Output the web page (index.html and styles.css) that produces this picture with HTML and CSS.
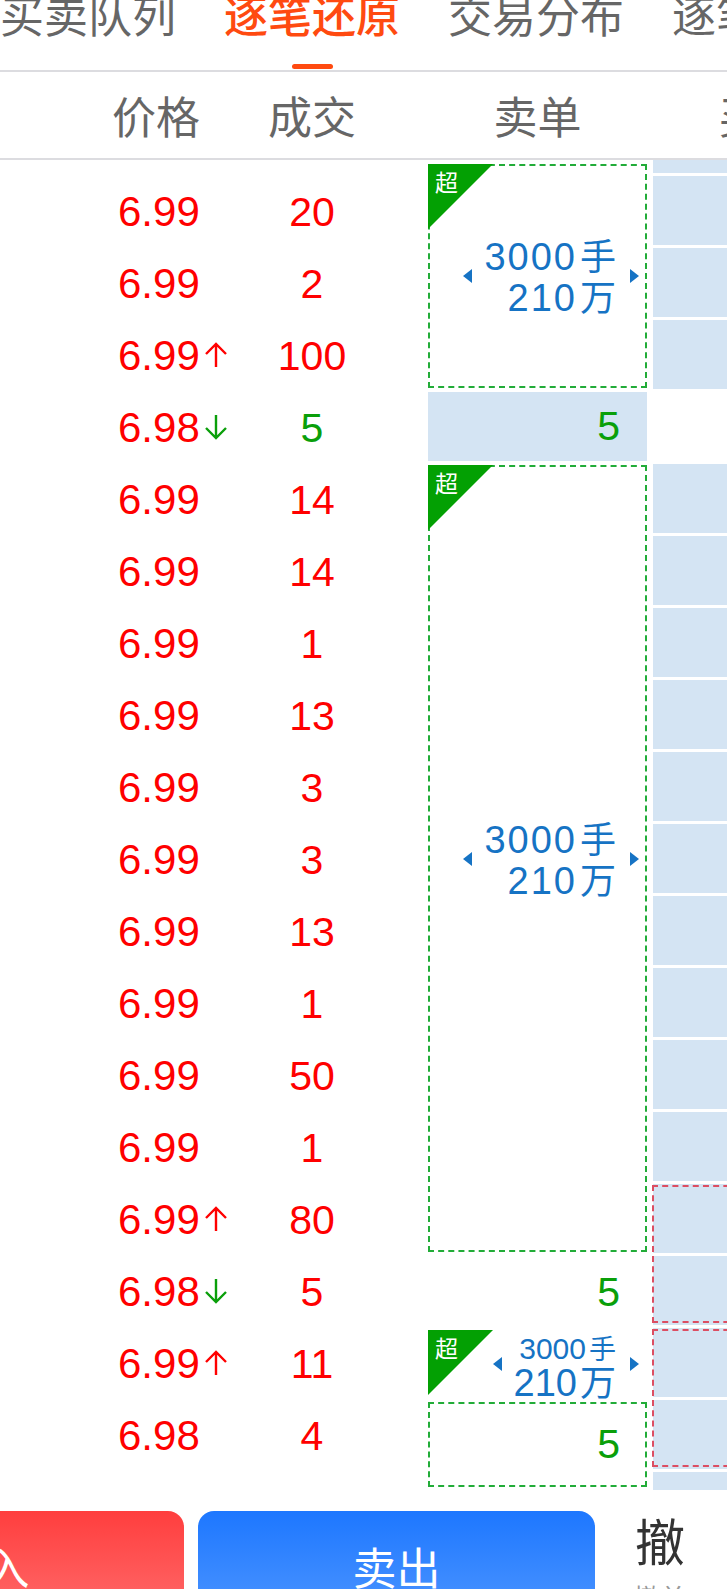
FILE: index.html
```html
<!DOCTYPE html>
<html lang="zh-CN">
<head>
    <meta charset="UTF-8">
    <title>逐笔还原</title>
    <link rel="stylesheet" href="styles.css">
</head>
<body>
<div class="tabs">
    <div class="tab"><span>买卖队列</span></div>
    <div class="tab current"><span>逐笔还原</span><i class="tab-line"></i></div>
    <div class="tab"><span>交易分布</span></div>
    <div class="tab"><span>逐笔明细</span></div>
</div>

<div class="head">
    <span class="h-price">价格</span>
    <span class="h-vol">成交</span>
    <span class="h-sell">卖单</span>
    <span class="h-buy">买单</span>
</div>

<div class="book">
    <!--逐笔成交-->
    <div class="trades">
        <div class="trade"><span class="p">6.99</span><span class="v">20</span></div>
        <div class="trade"><span class="p">6.99</span><span class="v">2</span></div>
        <div class="trade"><span class="p">6.99<svg class="arr" viewBox="0 0 24 26"><path d="M12 25V2M2 12L12 2L22 12"/></svg></span><span class="v">100</span></div>
        <div class="trade"><span class="p">6.98<svg class="arr down" viewBox="0 0 24 26"><path d="M12 1V24M2 14L12 24L22 14"/></svg></span><span class="v down">5</span></div>
        <div class="trade"><span class="p">6.99</span><span class="v">14</span></div>
        <div class="trade"><span class="p">6.99</span><span class="v">14</span></div>
        <div class="trade"><span class="p">6.99</span><span class="v">1</span></div>
        <div class="trade"><span class="p">6.99</span><span class="v">13</span></div>
        <div class="trade"><span class="p">6.99</span><span class="v">3</span></div>
        <div class="trade"><span class="p">6.99</span><span class="v">3</span></div>
        <div class="trade"><span class="p">6.99</span><span class="v">13</span></div>
        <div class="trade"><span class="p">6.99</span><span class="v">1</span></div>
        <div class="trade"><span class="p">6.99</span><span class="v">50</span></div>
        <div class="trade"><span class="p">6.99</span><span class="v">1</span></div>
        <div class="trade"><span class="p">6.99<svg class="arr" viewBox="0 0 24 26"><path d="M12 25V2M2 12L12 2L22 12"/></svg></span><span class="v">80</span></div>
        <div class="trade"><span class="p">6.98<svg class="arr down" viewBox="0 0 24 26"><path d="M12 1V24M2 14L12 24L22 14"/></svg></span><span class="v">5</span></div>
        <div class="trade"><span class="p">6.99<svg class="arr" viewBox="0 0 24 26"><path d="M12 25V2M2 12L12 2L22 12"/></svg></span><span class="v">11</span></div>
        <div class="trade"><span class="p">6.98</span><span class="v">4</span></div>
    </div>

    <!--卖单-->
    <div class="sells">
        <div class="order big first">
            <span class="tag">超</span>
            <i class="tri-l"></i>
            <div class="amt"><b>3000<em>手</em></b><b>210<em>万</em></b></div>
            <i class="tri-r"></i>
        </div>
        <div class="order fill">5</div>
        <div class="order big long">
            <span class="tag">超</span>
            <i class="tri-l"></i>
            <div class="amt"><b>3000<em>手</em></b><b>210<em>万</em></b></div>
            <i class="tri-r"></i>
        </div>
        <div class="order plain">5</div>
        <div class="order bare">
            <span class="tag">超</span>
            <i class="tri-l"></i>
            <div class="amt small"><b>3000<em>手</em></b><b>210<em>万</em></b></div>
            <i class="tri-r"></i>
        </div>
        <div class="order box last">5</div>
    </div>

    <!--买单-->
    <div class="buys">
        <div class="cell top"></div>
        <div class="cell"></div>
        <div class="cell"></div>
        <div class="cell"></div>
        <div class="blank"></div>
        <div class="cell"></div>
        <div class="cell"></div>
        <div class="cell"></div>
        <div class="cell"></div>
        <div class="cell"></div>
        <div class="cell"></div>
        <div class="cell"></div>
        <div class="cell"></div>
        <div class="cell"></div>
        <div class="cell"></div>
        <div class="hold">
            <div class="cell"></div>
            <div class="cell"></div>
        </div>
        <div class="hold">
            <div class="cell"></div>
            <div class="cell"></div>
        </div>
        <div class="cell end"></div>
    </div>
</div>

<div class="actions">
    <div class="btn buy">买入</div>
    <div class="btn sell">卖出</div>
    <div class="cancel">
        <span class="cancel-icon">撤</span>
        <span class="cancel-txt">撤单</span>
    </div>
</div>
</body>
</html>
```

FILE: styles.css
```css
html, body {
    margin: 0;
    padding: 0;
    overflow: hidden;
    background: #fff;
}

body {
    width: 727px;
    height: 1589px;
    font-family: "Liberation Sans", "Noto Sans CJK SC", sans-serif;
}

/* 顶部标签 */
.tabs {
    display: flex;
    gap: 48px;
    height: 70px;
    border-bottom: 2px solid #dcdce0;
    font-family: "Noto Sans CJK SC", sans-serif;
    font-size: 44px;
    color: #666;
}

.tab {
    flex: none;
    width: 176px;
    display: flex;
    flex-direction: column;
    align-items: center;
}

.tab span {
    line-height: 28px;
    white-space: nowrap;
}

.tab.current {
    color: #ff4a10;
    font-weight: 500;
}

.tab-line {
    width: 41px;
    height: 5px;
    margin-top: 36px;
    border-radius: 3px;
    background: #ff4a10;
}

/* 表头 */
.head {
    display: flex;
    height: 86px;
    line-height: 86px;
    padding-left: 112px;
    border-bottom: 2px solid #dcdce0;
    font-family: "Noto Sans CJK SC", sans-serif;
    font-size: 44px;
    color: #666;
    white-space: nowrap;
}

.head span {
    flex: none;
}

.h-price {
    width: 130px;
}

.h-vol {
    width: 140px;
    text-align: center;
}

.h-sell {
    width: 219px;
    margin-left: 46px;
    text-align: center;
}

.h-buy {
    width: 219px;
    margin-left: 6px;
    text-align: center;
}

/* 列表 */
.book {
    display: flex;
    height: 1330px;
    overflow: hidden;
}

.trades {
    flex: none;
    width: 270px;
    padding: 16px 0 0 112px;
}

.trade {
    display: flex;
    height: 72px;
    line-height: 72px;
    font-size: 41px;
    color: #f00;
}

.trade .p {
    width: 124px;
    padding-left: 6px;
    font-size: 42px;
    white-space: nowrap;
}

.trade .v {
    width: 140px;
    text-align: center;
}

.trade .v.down {
    color: #0a9f0a;
}

.arr {
    width: 24px;
    height: 26px;
    margin-left: 4px;
    vertical-align: 2px;
    fill: none;
    stroke: #f00;
    stroke-width: 2.4;
}

.arr.down {
    stroke: #0a9f0a;
}

.sells {
    flex: none;
    width: 219px;
    margin-left: 46px;
    display: flex;
    flex-direction: column;
}

.order {
    box-sizing: border-box;
    position: relative;
    font-size: 41px;
    color: #0a9f0a;
    text-align: right;
}

.order.big {
    display: flex;
    align-items: center;
    justify-content: flex-end;
    padding-right: 6px;
    border: 2px dashed #22ac38;
}

.order.first {
    height: 224px;
    margin: 4px 0;
}

.order.long {
    height: 787px;
    margin: 1px 0 4px;
}

.order.fill {
    height: 69px;
    line-height: 69px;
    margin-bottom: 3px;
    padding-right: 27px;
    background: #d4e4f3;
}

.order.plain {
    height: 72px;
    line-height: 72px;
    padding-right: 27px;
}

.order.bare {
    height: 72px;
    display: flex;
    align-items: center;
    justify-content: flex-end;
    padding-right: 8px;
}

.order.box {
    height: 85px;
    line-height: 81px;
    margin-top: 2px;
    padding-right: 25px;
    border: 2px dashed #22ac38;
}

.tag {
    position: absolute;
    top: -2px;
    left: -2px;
    width: 65px;
    height: 65px;
    padding: 4px 0 0 7px;
    box-sizing: border-box;
    background: #03a003;
    clip-path: polygon(0 0, 100% 0, 0 100%);
    font-family: "Noto Sans CJK SC", sans-serif;
    font-size: 23px;
    line-height: 26px;
    color: #fff;
    text-align: left;
}

.order.bare .tag {
    top: 2px;
    left: 0;
}

.tri-l, .tri-r {
    width: 0;
    height: 0;
    border-top: 7px solid transparent;
    border-bottom: 7px solid transparent;
}

.tri-l {
    border-right: 9px solid #1673c4;
}

.tri-r {
    border-left: 9px solid #1673c4;
}

.amt {
    display: flex;
    flex-direction: column;
    align-items: flex-end;
    margin: 0 14px 0 12px;
    color: #1673c4;
    font-size: 38px;
    line-height: 38px;
    letter-spacing: 2px;
}

.amt b {
    font-weight: normal;
    white-space: nowrap;
}

.amt em {
    font-style: normal;
    font-family: "Noto Sans CJK SC", sans-serif;
    font-size: 36px;
    letter-spacing: 0;
    margin-left: 3px;
}

.amt.small {
    margin-top: 4px;
    letter-spacing: 0;
}

.amt.small b:first-child {
    font-size: 30px;
    line-height: 30px;
}

.amt.small b:first-child em {
    font-size: 27px;
}

.amt.small b:last-child {
    line-height: 32px;
}

.buys {
    flex: none;
    width: 219px;
    margin-left: 6px;
    display: flex;
    flex-direction: column;
}

.cell {
    flex: none;
    height: 69px;
    margin-bottom: 3px;
    background: #d4e4f3;
}

.cell.top {
    height: 13px;
}

.cell.end {
    height: 18px;
    margin-bottom: 0;
}

.blank {
    flex: none;
    height: 72px;
}

.hold {
    position: relative;
}

.hold::after {
    content: "";
    position: absolute;
    top: 1px;
    right: 0;
    bottom: 5px;
    left: -1px;
    border: 2px dashed #dc4e62;
}

/* 底部按钮 */
.actions {
    display: flex;
    margin-top: 21px;
    font-family: "Noto Sans CJK SC", sans-serif;
}

.btn {
    flex: none;
    width: 397px;
    height: 110px;
    line-height: 110px;
    border-radius: 16px;
    font-size: 44px;
    color: #fff;
    text-align: center;
}

.btn.buy {
    margin-left: -213px;
    background: linear-gradient(#ff3e3e, #ff6c6c);
}

.btn.sell {
    margin-left: 14px;
    background: linear-gradient(#1d77ff, #4e96ff);
}

.cancel {
    flex: none;
    width: 80px;
    margin-left: 25px;
    display: flex;
    flex-direction: column;
    align-items: center;
}

.cancel-icon {
    font-size: 50px;
    line-height: 56px;
    color: #333;
}

.cancel-txt {
    margin-top: 12px;
    font-size: 26px;
    line-height: 36px;
    color: #999;
}
```
